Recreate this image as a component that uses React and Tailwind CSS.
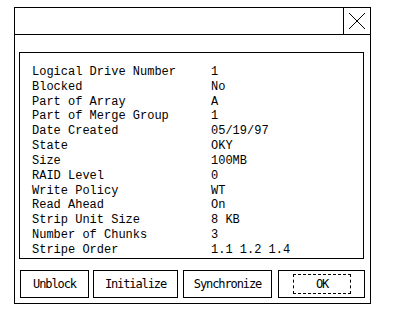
export default function App() {
  const rows = [
    ["Logical Drive Number", "1"],
    ["Blocked", "No"],
    ["Part of Array", "A"],
    ["Part of Merge Group", "1"],
    ["Date Created", "05/19/97"],
    ["State", "OKY"],
    ["Size", "100MB"],
    ["RAID Level", "0"],
    ["Write Policy", "WT"],
    ["Read Ahead", "On"],
    ["Strip Unit Size", "8 KB"],
    ["Number of Chunks", "3"],
    ["Stripe Order", "1.1 1.2 1.4"],
  ];
  const mono = { fontFamily: '"Liberation Mono", "DejaVu Sans Mono", monospace' };
  const btn = { fontFamily: '"DejaVu Sans Mono", "Liberation Mono", monospace' };
  return (
    <div className="w-[394px] h-[311px] bg-white pt-[7px] pl-[14px]" style={mono}>
      <div className="w-[357px] h-[297px] border border-black flex flex-col text-black">
        <div className="h-[27px] border-b border-black flex">
          <div className="flex-1" />
          <div className="w-[27px] h-[26px] border-l border-black">
            <svg width="26" height="26" viewBox="0 0 26 26">
              <line x1="5" y1="5" x2="21" y2="21" stroke="black" strokeWidth="1" />
              <line x1="21" y1="5" x2="5" y2="21" stroke="black" strokeWidth="1" />
            </svg>
          </div>
        </div>
        <div className="ml-[4px] mt-[17px] w-[345px] h-[207px] border border-black pt-[12px] pl-[12px]">
          {rows.map(([k, v]) => (
            <div key={k} className="flex text-[12px] leading-[14.83px] whitespace-pre">
              <span className="w-[179px]">{k}</span>
              <span>{v}</span>
            </div>
          ))}
        </div>
        <div className="flex mt-[11px] ml-[5px] text-[12px] tracking-[-1.1px]" style={btn}>
          <div className="w-[69px] h-[28px] border border-black flex items-center justify-center">Unblock</div>
          <div className="ml-[4px] w-[85px] h-[28px] border border-black flex items-center justify-center">Initialize</div>
          <div className="ml-[5px] w-[89px] h-[28px] border border-black flex items-center justify-center">Synchronize</div>
          <div className="ml-[6px] w-[87px] h-[28px] border border-black flex items-start pl-[14px] pt-[3px]">
            <div className="w-[58px] h-[20px] border border-dashed border-black flex items-center justify-center">OK</div>
          </div>
        </div>
      </div>
    </div>
  );
}
